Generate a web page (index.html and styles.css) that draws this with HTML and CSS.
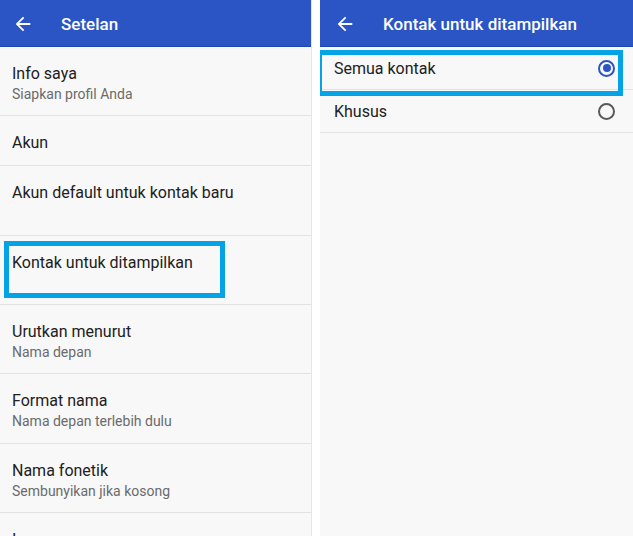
FILE: index.html
```html
<!DOCTYPE html>
<html lang="id">
<head>
    <meta charset="UTF-8">
    <meta name="viewport" content="width=device-width, initial-scale=1.0">
    <title>Setelan</title>
    <link rel="stylesheet" href="styles.css">
</head>
<body>
    <div class="screens">
        <!-- Left screen: settings list -->
        <div class="screen screen-left">
            <div class="appbar">
                <svg class="back" viewBox="0 0 24 24"><path d="M20 11H7.83l5.59-5.59L12 4l-8 8 8 8 1.41-1.41L7.83 13H20v-2z"/></svg>
                <span class="appbar-title">Setelan</span>
            </div>
            <div class="list">
                <div class="row">
                    <div class="row-title">Info saya</div>
                    <div class="row-sub">Siapkan profil Anda</div>
                </div>
                <div class="row row-short">
                    <div class="row-title">Akun</div>
                </div>
                <div class="row">
                    <div class="row-title">Akun default untuk kontak baru</div>
                </div>
                <div class="row">
                    <div class="row-title">Kontak untuk ditampilkan</div>
                </div>
                <div class="row">
                    <div class="row-title">Urutkan menurut</div>
                    <div class="row-sub">Nama depan</div>
                </div>
                <div class="row">
                    <div class="row-title">Format nama</div>
                    <div class="row-sub">Nama depan terlebih dulu</div>
                </div>
                <div class="row">
                    <div class="row-title">Nama fonetik</div>
                    <div class="row-sub">Sembunyikan jika kosong</div>
                </div>
                <div class="row">
                    <div class="row-title">Impor</div>
                </div>
            </div>
            <div class="mark mark-left"></div>
        </div>

        <!-- Right screen: contacts to display -->
        <div class="screen screen-right">
            <div class="appbar appbar-right">
                <svg class="back" viewBox="0 0 24 24"><path d="M20 11H7.83l5.59-5.59L12 4l-8 8 8 8 1.41-1.41L7.83 13H20v-2z"/></svg>
                <span class="appbar-title">Kontak untuk ditampilkan</span>
            </div>
            <div class="list">
                <div class="choice">
                    <span>Semua kontak</span>
                    <span class="radio radio-on"></span>
                </div>
                <div class="choice">
                    <span>Khusus</span>
                    <span class="radio"></span>
                </div>
            </div>
            <div class="mark mark-right"></div>
        </div>
    </div>
</body>
</html>
```

FILE: styles.css
```css
html, body {
    margin: 0;
    padding: 0;
    height: 100%;
    background: #fff;
    font-family: Roboto, "Noto Sans", Arial, sans-serif;
}
.screens {
    display: flex;
    gap: 8px;
    height: 536px;
    overflow: hidden;
}
.screen {
    position: relative;
    background: #f8f8f8;
    overflow: hidden;
}
.screen-left {
    width: 311px;
    border-right: 1px solid #e6e6e6;
}
.screen-right {
    flex: 1;
}
.appbar {
    height: 46px;
    background: #2b55c4;
    border-bottom: 1px solid #1f47b3;
    display: flex;
    align-items: center;
    color: #fff;
    padding-left: 12px;
}
.appbar-right {
    padding-left: 14px;
}
.back {
    width: 22px;
    height: 22px;
    fill: #fff;
    margin-top: 1px;
}
.appbar-title {
    font-size: 17px;
    font-weight: 500;
    margin-left: 27px;
    margin-top: 2px;
}
.row {
    height: 52.33px;
    padding: 16px 12px 0;
    border-bottom: 1px solid #e2e2e2;
}
.row-short {
    height: 33px;
}
.row-title {
    font-size: 16px;
    line-height: 21px;
    color: #212121;
}
.row-sub {
    font-size: 14px;
    line-height: 20px;
    color: #6b6b6b;
}
.choice {
    height: 42px;
    padding: 0 18px 0 14px;
    border-bottom: 1px solid #e2e2e2;
    display: flex;
    align-items: center;
    justify-content: space-between;
    font-size: 16px;
    color: #212121;
}
.radio {
    width: 13px;
    height: 13px;
    border: 2px solid #5a5a5a;
    border-radius: 50%;
    box-sizing: content-box;
    display: flex;
    align-items: center;
    justify-content: center;
}
.radio-on {
    border-color: #2b55c4;
}
.radio-on::after {
    content: "";
    width: 8px;
    height: 8px;
    border-radius: 50%;
    background: #2b55c4;
}
/* highlight frames drawn over the screenshot */
.mark {
    position: absolute;
    border: 5px solid #03a3e6;
}
.mark-left {
    left: 4px;
    top: 241px;
    width: 211px;
    height: 47px;
}
.mark-right {
    left: -3px;
    top: 50px;
    width: 296px;
    height: 36px;
}
```
